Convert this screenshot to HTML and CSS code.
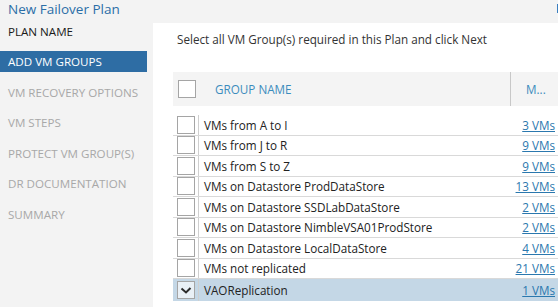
FILE: index.html
```html
<!DOCTYPE html>
<html>
    <head>
        <link rel="stylesheet" href="styles.css">
    </head>
    <body>
    <div id="wizard">
        <div class="wizard-title">New Failover Plan<span class="corner-tab"></span></div>
        <div class="wizard-body">
            <ul class="steps">
                <li class="step step-done">PLAN NAME</li>
                <li class="step step-active">ADD VM GROUPS</li>
                <li class="step">VM RECOVERY OPTIONS</li>
                <li class="step">VM STEPS</li>
                <li class="step">PROTECT VM GROUP(S)</li>
                <li class="step">DR DOCUMENTATION</li>
                <li class="step">SUMMARY</li>
            </ul>
            <div class="page">
                <p class="hint">Select all VM Group(s) required in this Plan and click Next</p>
                <div class="grid-head">
                    <span class="cell-check"><span class="box"></span></span>
                    <span class="head-name">GROUP NAME</span>
                    <span class="head-count">M...</span>
                </div>
                <div class="grid-rows">
                    <div class="row"><span class="cell-check"><span class="box"></span></span><span class="row-name">VMs from A to I</span><a class="row-count" href="#">3 VMs</a></div>
                    <div class="row"><span class="cell-check"><span class="box"></span></span><span class="row-name">VMs from J to R</span><a class="row-count" href="#">9 VMs</a></div>
                    <div class="row"><span class="cell-check"><span class="box"></span></span><span class="row-name">VMs from S to Z</span><a class="row-count" href="#">9 VMs</a></div>
                    <div class="row"><span class="cell-check"><span class="box"></span></span><span class="row-name">VMs on Datastore ProdDataStore</span><a class="row-count" href="#">13 VMs</a></div>
                    <div class="row"><span class="cell-check"><span class="box"></span></span><span class="row-name">VMs on Datastore SSDLabDataStore</span><a class="row-count" href="#">2 VMs</a></div>
                    <div class="row"><span class="cell-check"><span class="box"></span></span><span class="row-name">VMs on Datastore NimbleVSA01ProdStore</span><a class="row-count" href="#">2 VMs</a></div>
                    <div class="row"><span class="cell-check"><span class="box"></span></span><span class="row-name">VMs on Datastore LocalDataStore</span><a class="row-count" href="#">4 VMs</a></div>
                    <div class="row"><span class="cell-check"><span class="box"></span></span><span class="row-name">VMs not replicated</span><a class="row-count" href="#">21 VMs</a></div>
                    <div class="row row-selected">
                        <span class="cell-check"><span class="box box-checked"><svg width="12" height="9" viewBox="0 0 12 9"><path d="M1.5 3.5 L6 7.5 L10.5 3" fill="none" stroke="#2b2b2b" stroke-width="2"/></svg></span></span>
                        <span class="row-name">VAOReplication</span><a class="row-count" href="#">1 VMs</a>
                    </div>
                </div>
            </div>
        </div>
    </div>
    </body>
</html>
```

FILE: styles.css
```css
body {
    margin: 0;
    width: 558px;
    height: 307px;
    overflow: hidden;
    background-color: #f3f3f3;
    font-family: "Open Sans", "Noto Sans", sans-serif;
    font-size: 11.7px;
    color: #222;
}
#wizard {
    display: flex;
    flex-direction: column;
    height: 100%;
}
.wizard-title {
    position: relative;
    height: 20px;
    line-height: 19px;
    padding-left: 8px;
    font-size: 13.5px;
    color: #2b6ea7;
}
.corner-tab {
    position: absolute;
    right: 0;
    top: 4px;
    width: 1px;
    height: 9px;
    background-color: #3a7fc0;
}
.wizard-body {
    display: grid;
    grid-template-columns: 153px 1fr;
    flex: 1;
}
.steps {
    list-style: none;
    margin: 0;
    padding: 0.5px 6px 0 0;
}
.step {
    height: 21px;
    line-height: 21px;
    margin-bottom: 9.5px;
    padding-left: 8px;
    font-size: 11.6px;
    color: #a8a8a8;
}
.step-done {
    color: #1a1a1a;
}
.step-active {
    background-color: #2e6da4;
    color: #fff;
}
.page {
    margin-top: 3px;
    padding: 8px 0 0 20px;
    background-color: #fff;
}
.hint {
    margin: 0 0 25px 4px;
    line-height: 16px;
    color: #333;
}
.grid-head {
    display: flex;
    align-items: center;
    height: 34px;
    background-color: #f4f4f4;
}
.cell-check {
    display: flex;
    align-items: center;
    width: 26px;
    padding-left: 4px;
    box-sizing: border-box;
    align-self: stretch;
}
.grid-head .cell-check {
    padding-left: 5px;
}
.box {
    display: flex;
    align-items: center;
    justify-content: center;
    width: 18px;
    height: 18px;
    box-sizing: border-box;
    border: 1px solid #a5a5a5;
    background-color: #fff;
}
.box-checked {
    background-color: #e9f0f6;
}
.head-name {
    flex: 1;
    padding-left: 16px;
    color: #3b8cbd;
}
.head-count {
    align-self: stretch;
    display: flex;
    align-items: center;
    width: 32px;
    padding-left: 15px;
    border-left: 1px solid #c8c8c8;
    color: #3b8cbd;
}
.grid-rows {
    margin-top: 9px;
}
.row {
    display: flex;
    align-items: center;
    height: 20.5px;
    box-sizing: border-box;
    border-bottom: 1px solid #d9d9d9;
}
.row .cell-check {
    border-right: 1px solid #cfcfcf;
}
.row:last-child {
    border-bottom: none;
}
.row-selected {
    height: 21.5px;
    background-color: #c4d7e6;
}
.row-name {
    flex: 1;
    padding-left: 5px;
    white-space: nowrap;
    overflow: hidden;
}
.row-count {
    padding-right: 3px;
    color: #2b78ae;
}
```
